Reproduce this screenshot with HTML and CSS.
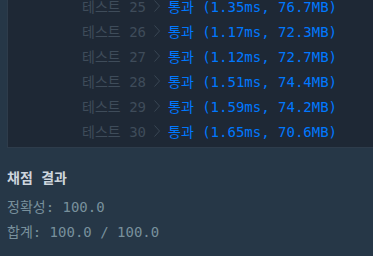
FILE: index.html
```html
<!DOCTYPE html>
<html lang="ko">
<head>
<meta charset="utf-8">
<link rel="stylesheet" href="styles.css">
</head>
<body>
<div class="console">
  <div class="result-box">
    <div class="row"><span class="label">테스트 25</span><span class="chev"><svg width="6" height="12" viewBox="0 0 6 12"><polyline points="0.5,0.5 5.5,6 0.5,11.5" fill="none" stroke="#3a4755" stroke-width="1"/></svg></span><span class="pass">통과 (1.35ms, 76.7MB)</span></div>
    <div class="row"><span class="label">테스트 26</span><span class="chev"><svg width="6" height="12" viewBox="0 0 6 12"><polyline points="0.5,0.5 5.5,6 0.5,11.5" fill="none" stroke="#3a4755" stroke-width="1"/></svg></span><span class="pass">통과 (1.17ms, 72.3MB)</span></div>
    <div class="row"><span class="label">테스트 27</span><span class="chev"><svg width="6" height="12" viewBox="0 0 6 12"><polyline points="0.5,0.5 5.5,6 0.5,11.5" fill="none" stroke="#3a4755" stroke-width="1"/></svg></span><span class="pass">통과 (1.12ms, 72.7MB)</span></div>
    <div class="row"><span class="label">테스트 28</span><span class="chev"><svg width="6" height="12" viewBox="0 0 6 12"><polyline points="0.5,0.5 5.5,6 0.5,11.5" fill="none" stroke="#3a4755" stroke-width="1"/></svg></span><span class="pass">통과 (1.51ms, 74.4MB)</span></div>
    <div class="row"><span class="label">테스트 29</span><span class="chev"><svg width="6" height="12" viewBox="0 0 6 12"><polyline points="0.5,0.5 5.5,6 0.5,11.5" fill="none" stroke="#3a4755" stroke-width="1"/></svg></span><span class="pass">통과 (1.59ms, 74.2MB)</span></div>
    <div class="row"><span class="label">테스트 30</span><span class="chev"><svg width="6" height="12" viewBox="0 0 6 12"><polyline points="0.5,0.5 5.5,6 0.5,11.5" fill="none" stroke="#3a4755" stroke-width="1"/></svg></span><span class="pass">통과 (1.65ms, 70.6MB)</span></div>
  </div>
  <div class="summary">
    <div class="title">채점 결과</div>
    <div class="line">정확성: 100.0</div>
    <div class="line">합계: 100.0 / 100.0</div>
  </div>
</div>
</body>
</html>
```
FILE: styles.css
```css
html, body {
  margin: 0;
  padding: 0;
  background: #263747;
  height: 100%;
  overflow: hidden;
}
.console {
  font-family: "DejaVu Sans Mono", "Noto Sans CJK KR", monospace;
  font-size: 14px;
  padding-left: 7px;
}
.result-box {
  margin-top: -7px;
  background: #1e2835;
  border: 1px solid #2e3c4b;
  border-right: none;
  border-top: none;
  padding: 0 0 4px 0;
}
.row {
  display: flex;
  align-items: center;
  height: 25px;
}
.label {
  width: 138px;
  text-align: right;
  color: #3f4c5a;
}
.chev {
  display: flex;
  align-items: center;
  justify-content: center;
  width: 22px;
}
.pass {
  color: #0078ff;
}
.summary {
  padding-top: 18px;
}
.title {
  color: #cdd5dd;
  font-weight: bold;
  height: 25px;
  line-height: 25px;
  margin-bottom: 4px;
}
.line {
  color: #78909c;
  height: 25px;
  line-height: 25px;
}
```
